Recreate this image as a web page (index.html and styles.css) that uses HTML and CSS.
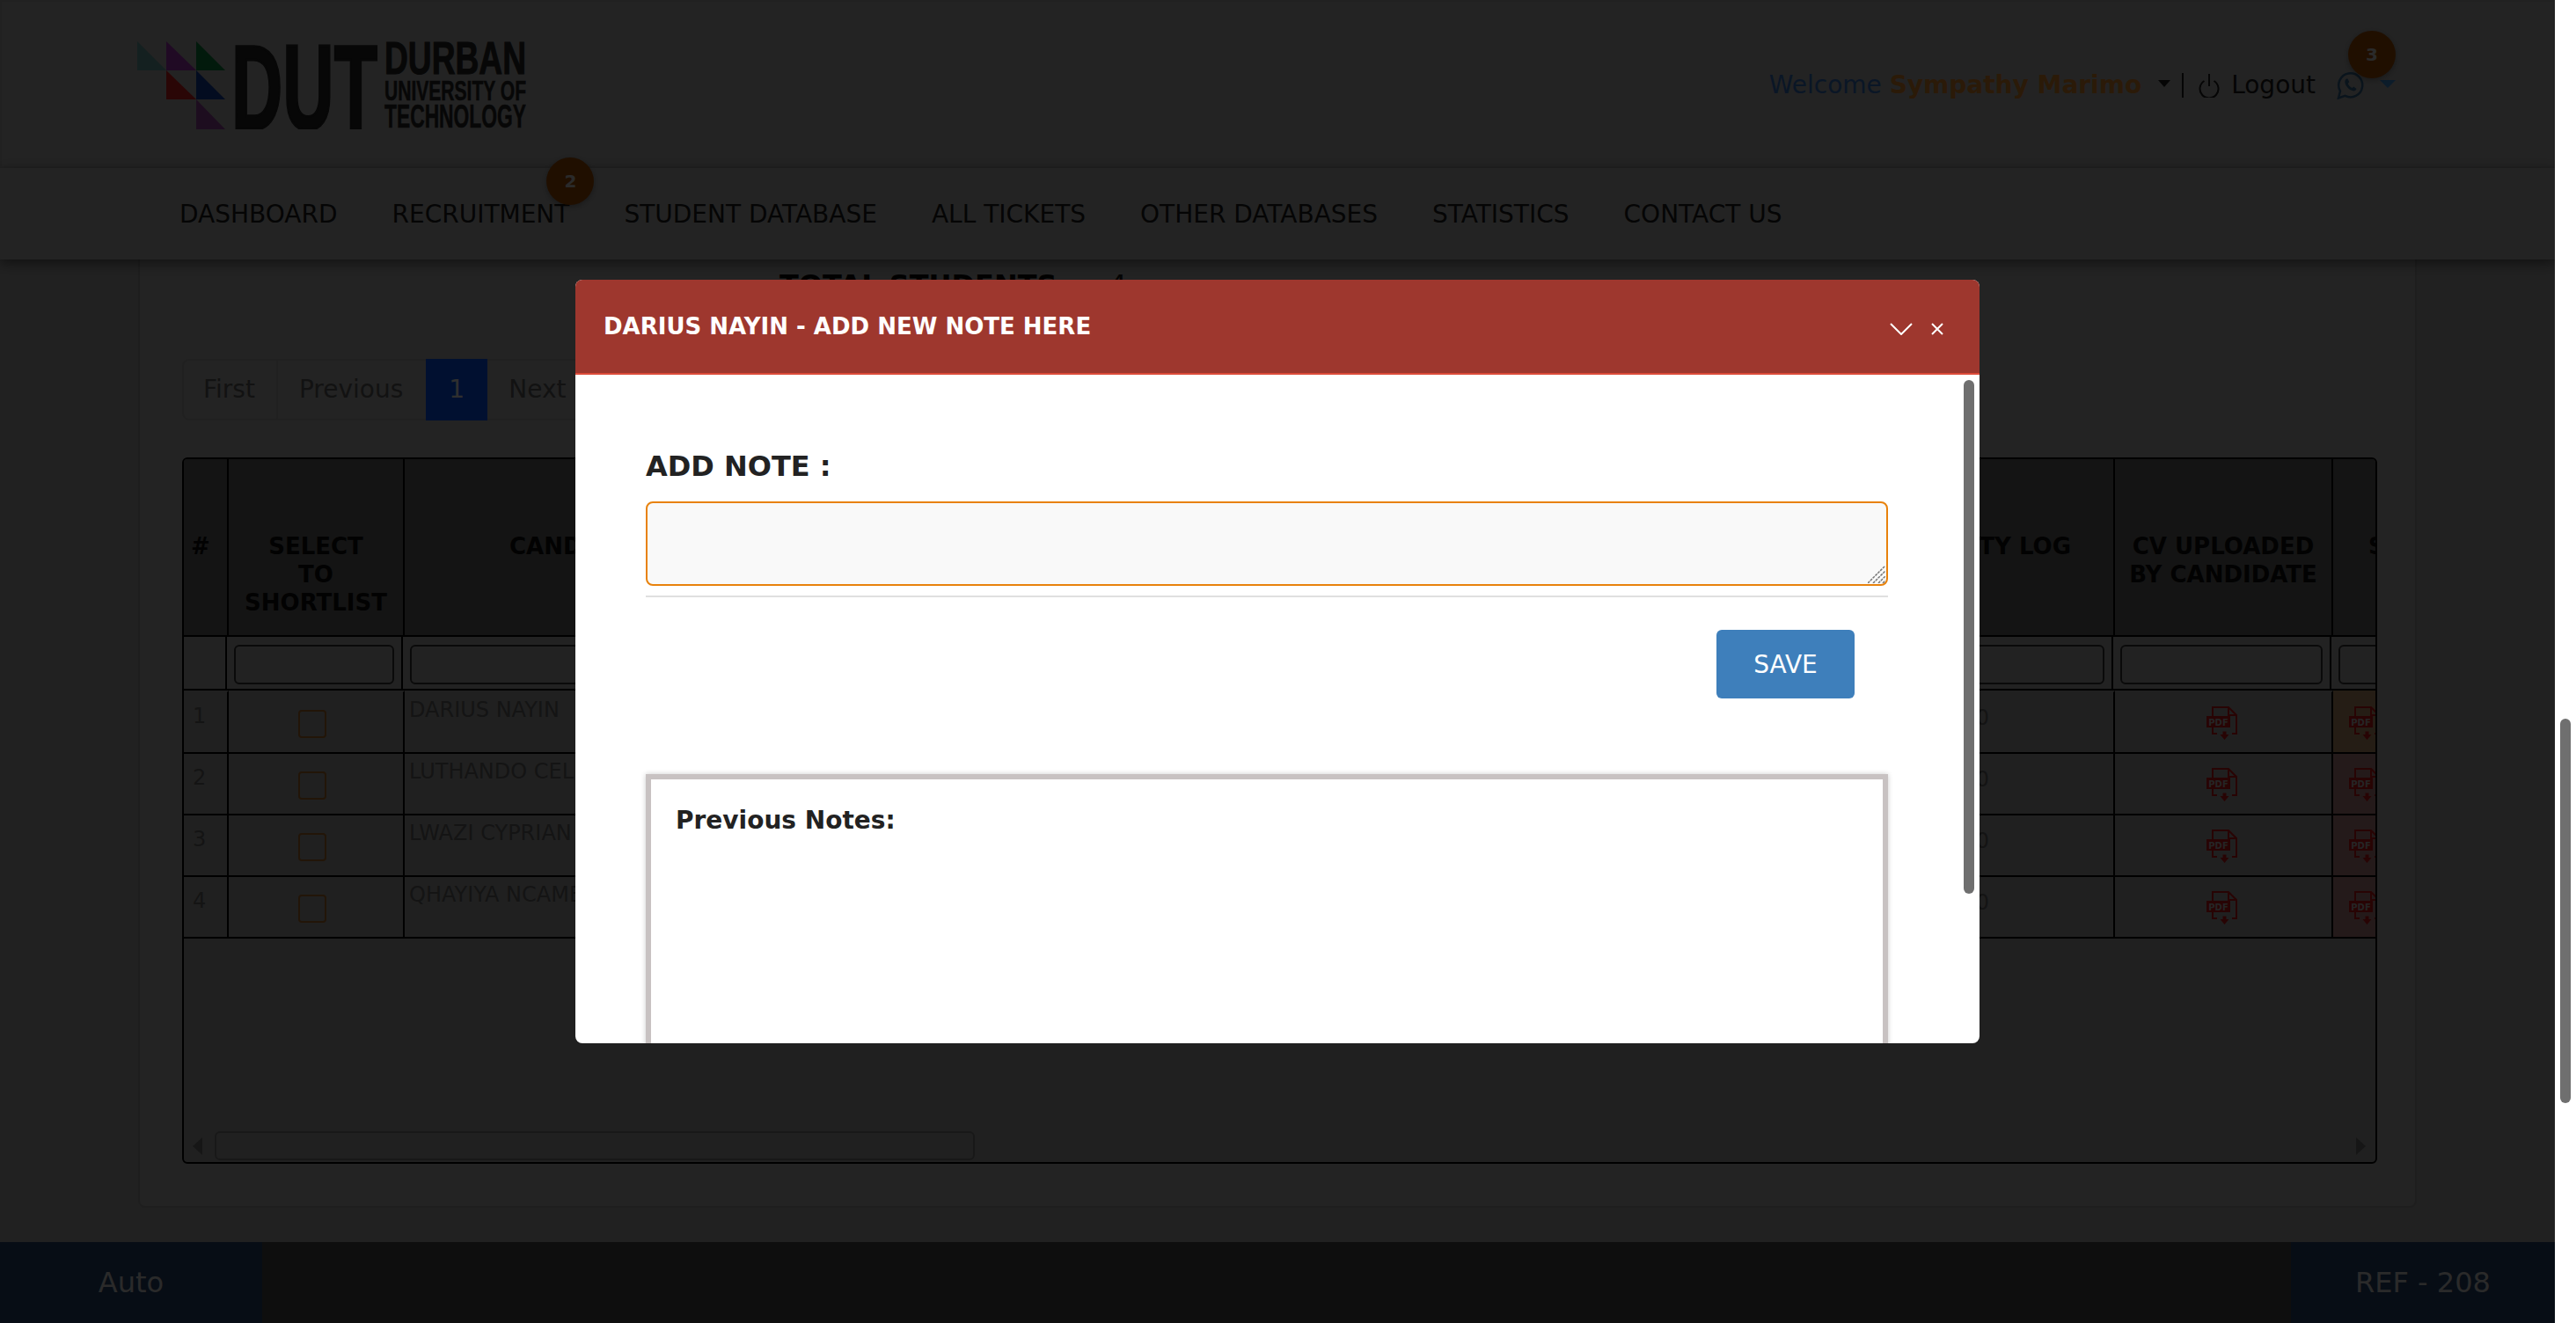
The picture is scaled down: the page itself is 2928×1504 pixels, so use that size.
FILE: index.html
```html
<!DOCTYPE html>
<html lang="en">
<head>
<meta charset="utf-8">
<title>Recruitment - Add note</title>
<link rel="stylesheet" href="styles.css">
</head>
<body>
<svg class="defs" width="0" height="0" aria-hidden="true">
  <symbol id="pdf" viewBox="0 0 35 38">
    <path class="pdf-line" d="M7 11V1H25L34 10V31H29M25 1V10H34M7 24V31H12"/>
    <rect class="pdf-fill" x="0" y="11" width="27" height="13"/>
    <text class="pdf-text" x="13.500" y="21.500">PDF</text>
    <path class="pdf-fill" d="M18.500 28.500H22.500V32H25.500L20.500 38L15.500 32H18.500Z"/>
  </symbol>
</svg>
<div class="viewport">
  <div class="page">
    <header class="topbar">
      <svg class="logo" width="442" height="100" viewBox="0 0 442 100" role="img" aria-label="DUT Durban University of Technology">
        <path class="tri-teal" d="M0 0V33H33Z"/>
        <path class="tri-purple" d="M33 0V33H67Z"/>
        <path class="tri-green" d="M67 0V33H100Z"/>
        <path class="tri-red" d="M33 33V66H67Z"/>
        <path class="tri-navy" d="M67 33V66H100Z"/>
        <path class="tri-violet" d="M67 66V100H100Z"/>
        <text class="logo-big" x="107" y="100" textLength="166" lengthAdjust="spacingAndGlyphs">DUT</text>
        <text class="logo-l1" x="281" y="37" textLength="161" lengthAdjust="spacingAndGlyphs">DURBAN</text>
        <text class="logo-l2" x="281" y="67" textLength="161" lengthAdjust="spacingAndGlyphs">UNIVERSITY OF</text>
        <text class="logo-l3" x="281" y="98" textLength="161" lengthAdjust="spacingAndGlyphs">TECHNOLOGY</text>
      </svg>
      <div class="user">
        <span class="welcome">Welcome <b class="name">Sympathy Marimo</b></span>
        <i class="caret caret-user"></i>
        <i class="pipe"></i>
        <svg class="power" width="24" height="28" viewBox="0 0 24 28"><path d="M6.500 9A10.500 10.500 0 1 0 17.500 9M12 1V15"/></svg>
        <span class="logout">Logout</span>
        <span class="chat">
          <svg class="wa" width="31" height="32" viewBox="0 0 31 32">
            <path class="wa-ring" d="M2 30.500L4 22.500A13.500 13.500 0 1 1 9.500 27.800Z"/>
            <path class="wa-phone" d="M11 8.500C9.500 9.500 9 11.500 9.500 13.500 10.500 17.500 14.500 21.500 18.500 22.300 20.500 22.700 22 21.500 22.500 20L19.300 17.500 17.500 19C15.500 18 13.500 16 12.800 14L14.300 12.300 12.500 8.500Z"/>
          </svg>
          <i class="caret caret-chat"></i>
          <span class="badge badge-chat">3</span>
        </span>
      </div>
    </header>
    <nav class="nav">
      <a class="nav-item">DASHBOARD</a>
      <a class="nav-item">RECRUITMENT<span class="badge badge-nav">2</span></a>
      <a class="nav-item">STUDENT DATABASE</a>
      <a class="nav-item">ALL TICKETS</a>
      <a class="nav-item">OTHER DATABASES</a>
      <a class="nav-item">STATISTICS</a>
      <a class="nav-item">CONTACT US</a>
    </nav>
    <main class="content">
      <section class="panel">
        <div class="stats"><b>TOTAL STUDENTS</b><span>4</span></div>
        <div class="pager">
          <a class="pg pg-first">First</a>
          <a class="pg pg-prev">Previous</a>
          <a class="pg pg-active">1</a>
          <a class="pg">Next</a>
          <a class="pg pg-last">Last</a>
        </div>
        <div class="grid">
          <div class="grid-clip">
            <table class="tbl tbl-head">
              <colgroup><col class="c-num"><col class="c-sel"><col class="c-name"><col class="c-a"><col class="c-a"><col class="c-a"><col class="c-log"><col class="c-cv"><col class="c-end"></colgroup>
              <tr>
                <th class="th-num">#</th><th>SELECT<br>TO<br>SHORTLIST</th><th>CANDIDATE NAME</th><th></th><th></th><th></th><th>ACTIVITY LOG</th><th>CV UPLOADED<br>BY CANDIDATE</th><th class="th-end">SHORTLISTED</th>
              </tr>
            </table>
            <table class="tbl tbl-filter">
              <colgroup><col class="c-num-f"><col class="c-sel"><col class="c-name"><col class="c-a"><col class="c-a"><col class="c-a"><col class="c-log"><col class="c-cv"><col class="c-end"></colgroup>
              <tr>
                <td></td><td><input class="filter" type="text"></td><td><input class="filter" type="text"></td><td><input class="filter" type="text"></td><td><input class="filter" type="text"></td><td><input class="filter" type="text"></td><td><input class="filter" type="text"></td><td><input class="filter" type="text"></td><td><input class="filter" type="text"></td>
              </tr>
            </table>
            <table class="tbl tbl-body">
              <colgroup><col class="c-num"><col class="c-sel"><col class="c-name"><col class="c-a"><col class="c-a"><col class="c-a"><col class="c-log"><col class="c-cv"><col class="c-end"></colgroup>
              <tr>
                <td class="td-num">1</td><td class="td-sel"><input class="check" type="checkbox"></td><td class="td-name">DARIUS NAYIN</td><td></td><td></td><td></td><td class="td-log">0</td><td class="td-cv"><svg class="pdf"><use href="#pdf"/></svg></td><td class="td-end tint-a"><svg class="pdf"><use href="#pdf"/></svg></td>
              </tr>
              <tr>
                <td class="td-num">2</td><td class="td-sel"><input class="check" type="checkbox"></td><td class="td-name">LUTHANDO CELE</td><td></td><td></td><td></td><td class="td-log">0</td><td class="td-cv"><svg class="pdf"><use href="#pdf"/></svg></td><td class="td-end tint-b"><svg class="pdf"><use href="#pdf"/></svg></td>
              </tr>
              <tr>
                <td class="td-num">3</td><td class="td-sel"><input class="check" type="checkbox"></td><td class="td-name">LWAZI CYPRIAN</td><td></td><td></td><td></td><td class="td-log">0</td><td class="td-cv"><svg class="pdf"><use href="#pdf"/></svg></td><td class="td-end tint-b"><svg class="pdf"><use href="#pdf"/></svg></td>
              </tr>
              <tr>
                <td class="td-num">4</td><td class="td-sel"><input class="check" type="checkbox"></td><td class="td-name">QHAYIYA NCAME</td><td></td><td></td><td></td><td class="td-log">0</td><td class="td-cv"><svg class="pdf"><use href="#pdf"/></svg></td><td class="td-end tint-b"><svg class="pdf"><use href="#pdf"/></svg></td>
              </tr>
            </table>
          </div>
          <div class="hscroll">
            <i class="arrow arrow-left"></i>
            <i class="hthumb"></i>
            <i class="arrow arrow-right"></i>
          </div>
        </div>
      </section>
    </main>
    <footer class="footer">
      <div class="foot-box foot-left">Auto</div>
      <div class="foot-box foot-right">REF - 208</div>
    </footer>
    <div class="backdrop"></div>
    <div class="modal">
      <div class="modal-head">
        <h2 class="modal-title">DARIUS NAYIN - ADD NEW NOTE HERE</h2>
        <div class="modal-tools">
          <svg width="26" height="14" viewBox="0 0 26 14"><path d="M1 1L13 13L25 1"/></svg>
          <svg width="14" height="14" viewBox="0 0 14 14"><path d="M1 1L13 13M13 1L1 13"/></svg>
        </div>
      </div>
      <div class="modal-body">
        <label class="note-label">ADD NOTE :</label>
        <div class="note-field">
          <textarea class="note-input"></textarea>
          <svg class="grip" width="20" height="20" viewBox="0 0 20 20"><path d="M0 20L20 0M6 20L20 6M12 20L20 12M17 20L20 17"/></svg>
        </div>
        <hr class="note-rule">
        <div class="note-actions"><button class="save" type="button">SAVE</button></div>
        <div class="notes"><b>Previous Notes:</b></div>
      </div>
      <i class="modal-thumb"></i>
    </div>
  </div>
  <div class="vscroll"><i class="vthumb"></i></div>
</div>
</body>
</html>
```
FILE: styles.css
```css
* { box-sizing: border-box; }
html, body { margin: 0; height: 100%; overflow: hidden; }
body { font-family: "DejaVu Sans", sans-serif; font-size: 28px; line-height: 40px; background: #fff; color: #191919; }
i { display: block; }
.defs { position: absolute; }

.viewport { display: flex; width: 2928px; height: 1504px; }
.page { position: relative; width: 2904px; height: 1504px; display: flex; flex-direction: column; background: #a5a5a5; overflow: hidden; }
.vscroll { width: 24px; background: #fff; padding: 817px 0 0 6px; }
.vthumb { width: 12px; height: 437px; border-radius: 6px; background: #6f6f6f; }

/* header */
.topbar { height: 191px; flex: none; display: flex; align-items: center; justify-content: space-between; padding: 2px 179px 0 154px; background: #afafaf; border: 2px solid #a5a5a5; position: relative; z-index: 2; }
.logo { display: block; }
.tri-teal { fill: #64a0a0; } .tri-purple { fill: #a032b4; } .tri-green { fill: #0a823c; }
.tri-red { fill: #d21e1e; } .tri-navy { fill: #0f3ca0; } .tri-violet { fill: #91419b; }
.logo text { font-family: "Liberation Sans", sans-serif; font-weight: 700; fill: #232323; stroke: #232323; }
.logo-big { font-size: 138px; stroke-width: 3px; }
.logo-l1 { font-size: 51px; stroke-width: 1px; }
.logo-l2 { font-size: 32px; stroke-width: .5px; }
.logo-l3 { font-size: 36px; stroke-width: .5px; }

.user { display: flex; align-items: center; white-space: nowrap; }
.welcome { color: #326ebe; }
.name { color: #d78228; }
.caret { width: 0; height: 0; border-style: solid; border-color: #191919 transparent transparent; }
.caret-user { border-width: 8px 7px 0; margin: -4px 0 0 19px; }
.pipe { width: 2px; height: 28px; margin-left: 13px; background: #191919; }
.power { margin-left: 17px; fill: none; stroke: #191919; stroke-width: 2; }
.logout { margin-left: 13px; }
.chat { position: relative; display: flex; align-items: center; height: 40px; margin-left: 24px; }
.wa { fill: none; stroke: #32648c; stroke-width: 2.500; }
.wa-phone { fill: #32648c; stroke: none; }
.caret-chat { border-width: 9px 9px 0; border-top-color: #3c8cd2; margin: -2px 0 0 18px; }

.badge { position: absolute; width: 54px; height: 54px; border-radius: 50%; background: #a04b00; color: #d2d2d2; font-size: 20px; font-weight: 700; line-height: 54px; text-align: center; box-shadow: 0 2px 6px rgba(0,0,0,.3); }
.badge-chat { top: -42px; right: 0; }
.badge-nav { top: -45px; right: -28px; }

/* nav */
.nav { height: 104px; flex: none; display: flex; gap: 62px; padding: 33px 0 0 204px; background: #afafaf; box-shadow: 0 4px 14px rgba(0,0,0,.5); position: relative; z-index: 2; }
.nav-item { position: relative; height: 40px; white-space: nowrap; }

/* content */
.content { flex: 1; min-height: 0; }
.panel { width: 2590px; margin: -20px 0 0 157px; height: 1098px; padding: 26px 0 0 48px; background: #afafaf; border: 2px solid #969696; border-radius: 8px; }
.stats { display: flex; gap: 59px; margin-left: 679px; height: 42px; font-size: 32px; line-height: 42px; white-space: nowrap; }
.stats b { color: #0a0a0a; }
.pager { display: flex; width: max-content; height: 70px; margin-top: 63px; border: 2px solid #a0a0a0; border-radius: 8px; }
.pg { padding: 0 24px; line-height: 66px; color: #5a5a5a; border-left: 2px solid #a0a0a0; }
.pg-first { border-left: 0; padding: 0 24px 0 22px; }
.pg-prev { padding-right: 26px; }
.pg-active { padding: 0 26px; margin: -2px 0; line-height: 70px; background: #0550f0; color: #ebebeb; border: 0; width: 70px; }
.pg-active + .pg { border-left: 0; }

.grid { display: flex; flex-direction: column; width: 2495px; height: 803px; margin-top: 42px; border: 2px solid #000; border-radius: 6px; background: #a0a0a0; overflow: hidden; }
.grid-clip { flex: 1; min-height: 0; overflow: hidden; }
.tbl { border-collapse: separate; border-spacing: 0; table-layout: fixed; width: 2782px; }
.tbl-filter { width: 2780px; }
.c-num { width: 51px; } .c-num-f { width: 49px; } .c-sel { width: 200px; } .c-name { width: 502px; }
.c-a { width: 381px; } .c-log { width: 299px; } .c-cv { width: 248px; } .c-end { width: 339px; }
.tbl th, .tbl td { border-right: 2px solid #000; border-bottom: 2px solid #000; padding: 0; vertical-align: top; }
.tbl th { height: 202px; padding-top: 83px; background: #646464; color: #0a0a0a; font-size: 26px; line-height: 32px; font-weight: 700; text-align: center; white-space: nowrap; }
.tbl .th-num { padding-right: 11px; }
.tbl .th-end { text-align: left; padding-left: 40px; }
.tbl-filter td { height: 61px; padding: 9px 8px 0; background: #aaa; }
.filter { display: block; width: 100%; height: 45px; border: 2px solid #323232; border-radius: 6px; background: #aaa; }
.tbl-body td { height: 70px; background: #a0a0a0; color: #646464; font-size: 24px; line-height: 34px; white-space: nowrap; overflow: hidden; }
.tbl-body tr:first-child td { height: 72px; border-top: 2px solid transparent; }
.tbl-body .td-num { padding: 10px 0 0 10px; }
.tbl-body .td-sel { padding: 20px 8px 0 0; text-align: center; }
.tbl-body .td-name { padding: 3px 0 0 5px; }
.tbl-body .td-log { padding: 12px 0 0; text-align: center; }
.tbl-body .td-cv { padding: 16px 4px 0 0; text-align: center; }
.tbl-body .td-end { padding: 16px 0 0 18px; }
.tbl-body .tint-a { background: #b9916a; }
.tbl-body .tint-b { background: #b48282; }
.check { display: block; appearance: none; width: 32px; height: 32px; margin: 0 auto; border: 2px solid #aa6928; border-radius: 4px; background: #a0a0a0; }
.pdf { display: block; width: 35px; height: 38px; margin: 0 auto; }
.td-end .pdf { margin: 0; }
.pdf-line { fill: none; stroke: #c81414; stroke-width: 2; }
.pdf-fill { fill: #c81414; }
.pdf-text { fill: #bbb; font-family: "DejaVu Sans", sans-serif; font-size: 10px; font-weight: 700; text-anchor: middle; }

.hscroll { flex: none; display: flex; align-items: center; height: 33px; margin-bottom: 2px; padding: 0 11px 0 10px; }
.arrow { width: 0; height: 0; border-style: solid; border-color: transparent; border-width: 10px 0; }
.arrow-left { border-right: 11px solid #6e6e6e; }
.arrow-right { border-left: 11px solid #6e6e6e; margin-left: auto; }
.hthumb { width: 864px; height: 33px; margin-left: 14px; border: 2px solid #787878; border-radius: 6px; background: #a0a0a0; }

/* footer */
.footer { height: 92px; flex: none; display: flex; justify-content: space-between; background: #464646; }
.foot-box { display: flex; align-items: center; justify-content: center; background: #234169; color: #d2d2d2; font-size: 32px; }
.foot-left { width: 298px; }
.foot-right { width: 300px; }

/* modal */
.backdrop { position: absolute; inset: 0; z-index: 3; background: rgba(0,0,0,.8); }
.modal { position: absolute; z-index: 4; left: 654px; top: 318px; width: 1596px; height: 868px; display: flex; flex-direction: column; background: #fff; border-radius: 8px; overflow: hidden; }
.modal-head { height: 108px; flex: none; display: flex; align-items: center; justify-content: space-between; padding: 0 41px 0 32px; background: #9e372e; border-bottom: 2px solid #dd4b39; }
.modal-title { margin: 0; color: #fff; font-size: 26px; line-height: 36px; font-weight: 700; }
.modal-tools { display: flex; gap: 21px; margin-top: 6px; }
.modal-tools svg { display: block; fill: none; stroke: #fff; stroke-width: 2; }
.modal-body { flex: 1; min-height: 0; overflow: hidden; padding: 83px 104px 0 80px; color: #222; }
.note-label { display: block; font-size: 32px; line-height: 42px; font-weight: 700; }
.note-field { position: relative; width: 1412px; height: 96px; margin-top: 19px; }
.note-input { display: block; width: 100%; height: 100%; background: #f9f9f9; border: 2px solid #e8820c; border-radius: 8px; outline: 0; resize: none; }
.grip { position: absolute; right: 3px; bottom: 3px; fill: none; stroke: #777; stroke-width: 1.500; stroke-dasharray: 3 1; }
.note-rule { width: 1412px; height: 2px; margin: 11px 0 0; border: 0; background: #e0e0e0; }
.note-actions { display: flex; justify-content: flex-end; width: 1412px; padding-right: 38px; margin-top: 37px; }
.save { width: 157px; height: 78px; border: 0; border-radius: 6px; background: #3e7fbb; color: #fff; font: 28px "DejaVu Sans", sans-serif; }
.notes { width: 1412px; height: 500px; margin-top: 86px; padding: 27px 0 0 28px; border: 6px solid #c8c2c2; box-shadow: 0 0 6px rgba(0,0,0,.2); }
.modal-thumb { position: absolute; left: 1578px; top: 114px; width: 12px; height: 584px; border-radius: 6px; background: #6f6f6f; }
```
